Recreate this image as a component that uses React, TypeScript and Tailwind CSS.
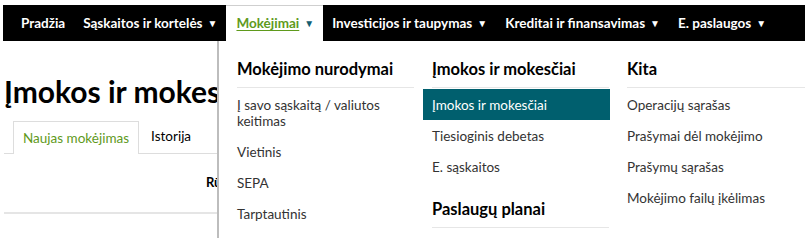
const font = { fontFamily: 'Lato, "Noto Sans", sans-serif' }

function NavItem(props: { label: string; caret?: boolean; active?: boolean }) {
  if (props.active) {
    return (
      <div className="h-full flex items-center pl-[10px] pr-[9px] bg-white border-t border-[#cfcfcf]">
        <span className="text-[#5f9a1c] underline underline-offset-2 decoration-1">{props.label}</span>
        <span className="ml-[5px] text-[10px] text-[#135e72]">▼</span>
      </div>
    )
  }
  return (
    <div className="h-full flex items-center px-[9px] text-white">
      <span>{props.label}</span>
      {props.caret && <span className="ml-[5px] text-[10px]">▼</span>}
    </div>
  )
}

function Item(props: { children: React.ReactNode; active?: boolean }) {
  return (
    <div
      className={
        'pt-[8px] pb-[7px] leading-[16px] text-[13.5px] ' +
        (props.active ? 'bg-[#005f6e] text-white -ml-[9px] pl-[9px] mr-[-1px]' : 'text-[#333]')
      }
    >
      {props.children}
    </div>
  )
}

function Heading(props: { children: React.ReactNode; className?: string }) {
  return (
    <div className={'pt-[16px] pb-[6px] leading-[24px] text-[16.5px] font-bold text-black border-b border-[#e6e6e6] mb-[1px] ' + (props.className ?? '')}>
      {props.children}
    </div>
  )
}

export default function App() {
  return (
    <div className="relative w-[805px] h-[238px] overflow-hidden bg-white" style={font}>
      <div className="pt-[5px] pl-[3px]">
        <nav className="h-[36px] bg-black flex items-center pl-[9px] text-[13.5px] font-bold">
          <NavItem label="Pradžia" />
          <NavItem label="Sąskaitos ir kortelės" caret />
          <NavItem label="Mokėjimai" active />
          <NavItem label="Investicijos ir taupymas" caret />
          <NavItem label="Kreditai ir finansavimas" caret />
          <NavItem label="E. paslaugos" caret />
        </nav>

        <div className="pl-[1px]">
          <h1 className="mt-[30px] text-[30px] leading-[40px] font-bold text-black whitespace-nowrap">Įmokos ir mokesčiai</h1>
          <div className="mt-[10px] flex items-end border-b border-[#dddddd] h-[33px]">
            <div className="ml-[9px] h-[33px] px-[9px] flex items-center border border-b-0 border-[#dddddd] bg-white mb-[-1px] text-[13.5px] text-[#5f9a1c]">
              Naujas mokėjimas
            </div>
            <div className="ml-[12px] h-[33px] flex items-center text-[13.5px] text-black">Istorija</div>
          </div>
          <div className="h-[58px] flex items-center pl-[202px]">
            <span className="text-[13px] font-bold text-black">Rūšiuoti</span>
          </div>
          <div className="h-[2px] bg-[#e5e5e5]" />
        </div>
      </div>

      <div className="absolute left-[217px] top-[41px] right-0 bottom-0 bg-white border-l-2 border-[#bdbdbd] pl-[9px] flex">
        <div className="w-[195px] px-[9px]">
          <Heading>Mokėjimo nurodymai</Heading>
          <Item>
            Į savo sąskaitą / valiutos
            <br />
            keitimas
          </Item>
          <Item>Vietinis</Item>
          <Item>SEPA</Item>
          <Item>Tarptautinis</Item>
        </div>
        <div className="w-[195px] px-[9px]">
          <Heading>Įmokos ir mokesčiai</Heading>
          <Item active>Įmokos ir mokesčiai</Item>
          <Item>Tiesioginis debetas</Item>
          <Item>E. sąskaitos</Item>
          <Heading className="mt-[-1px]">Paslaugų planai</Heading>
        </div>
        <div className="flex-1 pl-[9px]">
          <Heading>Kita</Heading>
          <Item>Operacijų sąrašas</Item>
          <Item>Prašymai dėl mokėjimo</Item>
          <Item>Prašymų sąrašas</Item>
          <Item>Mokėjimo failų įkėlimas</Item>
        </div>
      </div>
    </div>
  )
}
